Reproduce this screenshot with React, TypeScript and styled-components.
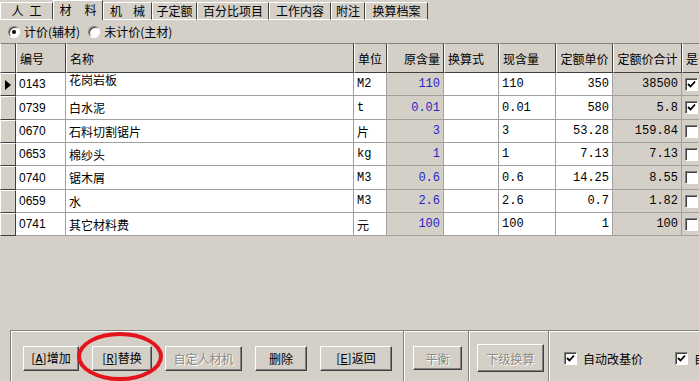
import styled, { createGlobalStyle } from 'styled-components';

const GlobalStyle = createGlobalStyle`
  body {
    margin: 0;
    background: #d4d0c8;
  }
`

const CJK = `"Noto Sans CJK SC", "Liberation Sans", sans-serif`
const MONO = `"Liberation Mono", "Noto Sans CJK SC", monospace`

const Window = styled.div`
  width: 699px;
  height: 381px;
  overflow: hidden;
  background: #d4d0c8;
  display: flex;
  flex-direction: column;
  position: relative;
  font-family: ${CJK};
  font-size: 12px;
  color: #000;
`

const TabBar = styled.div`
  display: flex;
  align-items: flex-end;
  height: 20px;
  flex-shrink: 0;
`

const Tab = styled.div<{ $w: number; $active?: boolean; $spacing?: number }>`
  box-sizing: border-box;
  width: ${p => p.$w}px;
  height: ${p => (p.$active ? 20 : 18)}px;
  display: flex;
  align-items: center;
  justify-content: center;
  border-top: 1px solid #fff;
  border-left: 1px solid #fff;
  border-right: 1px solid #404040;
  border-bottom: ${p => (p.$active ? 'none' : '1px solid #fff')};
  letter-spacing: ${p => p.$spacing ?? 0}px;
  text-indent: ${p => p.$spacing ?? 0}px;
  line-height: 1;
  padding-bottom: ${p => (p.$active ? 2 : 0)}px;
  white-space: nowrap;
`

const RadioRow = styled.div`
  height: 23px;
  flex-shrink: 0;
  display: flex;
  align-items: center;
  padding-left: 8px;
`

const RadioItem = styled.label<{ $gap?: number }>`
  display: flex;
  align-items: center;
  gap: 4px;
  margin-right: ${p => p.$gap ?? 0}px;
`

const RadioDot = styled.span<{ $on?: boolean }>`
  box-sizing: border-box;
  width: 12px;
  height: 12px;
  border-radius: 50%;
  background: #fff;
  border: 1px solid;
  border-color: #808080 #fff #fff #808080;
  box-shadow: inset 1px 1px 0 #404040;
  display: flex;
  align-items: center;
  justify-content: center;

  &::after {
    content: '';
    width: 4px;
    height: 4px;
    border-radius: 50%;
    background: ${p => (p.$on ? '#000' : 'transparent')};
  }
`

const Grid = styled.div`
  flex-shrink: 0;
  display: flex;
  flex-direction: column;
  width: 740px;
`

const Row = styled.div<{ $h: number }>`
  display: flex;
  height: ${p => p.$h}px;
`

const HeadCell = styled.div<{ $w: number; $align?: string }>`
  box-sizing: border-box;
  width: ${p => p.$w}px;
  flex-shrink: 0;
  display: flex;
  align-items: center;
  justify-content: ${p => p.$align ?? 'flex-start'};
  padding: 0 3px;
  background: #d4d0c8;
  border-top: 1px solid #808080;
  border-left: 1px solid #fff;
  border-right: 1px solid #404040;
  border-bottom: 1px solid #404040;
  white-space: nowrap;
  overflow: hidden;
`

const Indicator = styled.div`
  box-sizing: border-box;
  width: 16px;
  flex-shrink: 0;
  background: #d4d0c8;
  border-top: 1px solid #fff;
  border-left: 1px solid #fff;
  border-right: 1px solid #404040;
  border-bottom: 1px solid #404040;
  display: flex;
  align-items: center;
  padding-left: 4px;
`

const Arrow = styled.span`
  width: 0;
  height: 0;
  border-top: 5px solid transparent;
  border-bottom: 5px solid transparent;
  border-left: 6px solid #000;
`

const Cell = styled.div<{ $w: number; $gray?: boolean; $right?: boolean; $mono?: boolean; $blue?: boolean; $top?: boolean }>`
  box-sizing: border-box;
  width: ${p => p.$w}px;
  flex-shrink: 0;
  display: flex;
  align-items: ${p => (p.$top ? 'flex-start' : 'center')};
  justify-content: ${p => (p.$right ? 'flex-end' : 'flex-start')};
  padding: 0 3px;
  background: ${p => (p.$gray ? '#d4d0c8' : '#fff')};
  border-right: 1px solid #a0a0a0;
  border-bottom: 1px solid #a0a0a0;
  color: ${p => (p.$blue ? '#2626c8' : '#000')};
  font-family: ${p => (p.$mono ? MONO : CJK)};
  font-size: 12px;
  line-height: ${p => (p.$top ? '14px' : 'normal')};
  white-space: nowrap;
  overflow: hidden;
`

const CodeText = styled.span`
  font-family: "Liberation Sans", sans-serif;
`

const CheckBox = styled.span`
  box-sizing: border-box;
  width: 13px;
  height: 13px;
  background: #fff;
  border: 1px solid;
  border-color: #808080 #fff #fff #808080;
  box-shadow: inset 1px 1px 0 #404040;
  display: flex;
  align-items: center;
  justify-content: center;
  flex-shrink: 0;
`

const Spacer = styled.div`
  flex: 1;
`

const BottomBar = styled.div`
  height: 51px;
  flex-shrink: 0;
  margin-left: 10px;
  display: flex;
`

const Group = styled.div<{ $w?: number; $pad: number }>`
  box-sizing: border-box;
  ${p => (p.$w ? `width: ${p.$w}px;` : 'flex: 1;')}
  flex-shrink: 0;
  display: flex;
  align-items: center;
  gap: 13px;
  padding-left: ${p => p.$pad}px;
  padding-top: 4px;
  border-top: 1px solid #808080;
  border-left: 1px solid #808080;
  box-shadow: inset 1px 1px 0 #fff;
  white-space: nowrap;
`

const Button = styled.button<{ $w: number; $h?: number }>`
  box-sizing: border-box;
  width: ${p => p.$w}px;
  height: ${p => p.$h ?? 25}px;
  padding: 0;
  background: #d4d0c8;
  border: 1px solid;
  border-color: #fff #404040 #404040 #fff;
  box-shadow: inset -1px -1px 0 #808080;
  font-family: ${CJK};
  font-size: 12px;
  color: #000;
  &:disabled {
    color: #8c8a85;
    text-shadow: 1px 1px 0 #fff;
  }
`

const Key = styled.span`
  font-family: ${MONO};
  font-size: 12px;
  text-decoration: underline;
`

const CheckLabel = styled.label<{ $gap?: number }>`
  display: flex;
  align-items: center;
  gap: 6px;
  margin-right: ${p => p.$gap ?? 0}px;
  white-space: nowrap;
  flex-shrink: 0;
`

const Ring = styled.div`
  position: absolute;
  left: 77px;
  top: 332px;
  width: 86px;
  height: 49px;
  box-sizing: border-box;
  border: 4px solid #e5141c;
  border-radius: 50%;
  pointer-events: none;
`

const Tick = () => (
  <svg width="9" height="9" viewBox="0 0 9 9">
    <path d="M1 4 L3.5 6.5 L8 1.5" fill="none" stroke="#000" strokeWidth="1.8" />
  </svg>
)

const cols = [16, 50, 288, 33, 57, 55, 57, 57, 69, 58]

const tabs = [
  { t: '人工', w: 53, spacing: 6 },
  { t: '材料', w: 50, active: true, spacing: 13 },
  { t: '机械', w: 49, spacing: 11 },
  { t: '子定额', w: 45 },
  { t: '百分比项目', w: 72 },
  { t: '工作内容', w: 62 },
  { t: '附注', w: 34 },
  { t: '换算档案', w: 63 },
]

const rows = [
  { code: '0143', name: '花岗岩板', unit: 'M2', base: '110', now: '110', price: '350', total: '38500', on: true, h: 23 },
  { code: '0739', name: '白水泥', unit: 't', base: '0.01', now: '0.01', price: '580', total: '5.8', on: true, h: 24 },
  { code: '0670', name: '石料切割锯片', unit: '片', base: '3', now: '3', price: '53.28', total: '159.84', h: 23 },
  { code: '0653', name: '棉纱头', unit: 'kg', base: '1', now: '1', price: '7.13', total: '7.13', h: 23 },
  { code: '0740', name: '锯木屑', unit: 'M3', base: '0.6', now: '0.6', price: '14.25', total: '8.55', h: 24 },
  { code: '0659', name: '水', unit: 'M3', base: '2.6', now: '2.6', price: '0.7', total: '1.82', h: 23 },
  { code: '0741', name: '其它材料费', unit: '元', base: '100', now: '100', price: '1', total: '100', h: 23 },
]

const App = () => {
  return (
    <Window>
      <GlobalStyle />
      <TabBar>
        {tabs.map(tab => (
          <Tab key={tab.t} $w={tab.w} $active={tab.active} $spacing={tab.spacing}>{tab.t}</Tab>
        ))}
      </TabBar>

      <RadioRow>
        <RadioItem $gap={8}><RadioDot $on />计价(辅材)</RadioItem>
        <RadioItem><RadioDot />未计价(主材)</RadioItem>
      </RadioRow>

      <Grid>
        <Row $h={30}>
          <HeadCell $w={cols[0]} />
          <HeadCell $w={cols[1]}>编号</HeadCell>
          <HeadCell $w={cols[2]}>名称</HeadCell>
          <HeadCell $w={cols[3]}>单位</HeadCell>
          <HeadCell $w={cols[4]} $align="flex-end">原含量</HeadCell>
          <HeadCell $w={cols[5]}>换算式</HeadCell>
          <HeadCell $w={cols[6]}>现含量</HeadCell>
          <HeadCell $w={cols[7]} $align="center">定额单价</HeadCell>
          <HeadCell $w={cols[8]} $align="center">定额价合计</HeadCell>
          <HeadCell $w={cols[9]}>是否主材</HeadCell>
        </Row>
        {rows.map((r, i) => (
          <Row key={r.code} $h={r.h}>
            <Indicator>{i === 0 && <Arrow />}</Indicator>
            <Cell $w={cols[1]}><CodeText>{r.code}</CodeText></Cell>
            <Cell $w={cols[2]} $top={i === 0}>{r.name}</Cell>
            <Cell $w={cols[3]} $mono={/^[A-Za-z0-9]+$/.test(r.unit)}>{r.unit}</Cell>
            <Cell $w={cols[4]} $gray $right $mono $blue>{r.base}</Cell>
            <Cell $w={cols[5]} />
            <Cell $w={cols[6]} $mono>{r.now}</Cell>
            <Cell $w={cols[7]} $right $mono>{r.price}</Cell>
            <Cell $w={cols[8]} $gray $right $mono>{r.total}</Cell>
            <Cell $w={cols[9]} $gray>
              <CheckBox>{r.on && <Tick />}</CheckBox>
            </Cell>
          </Row>
        ))}
      </Grid>

      <Spacer />

      <BottomBar>
        <Group $w={393} $pad={12}>
          <Button $w={56}>[<Key>A</Key>]增加</Button>
          <Button $w={60}>[<Key>R</Key>]替换</Button>
          <Button $w={77} disabled>自定人材机</Button>
          <Button $w={52}>删除</Button>
          <Button $w={72}>[<Key>E</Key>]返回</Button>
        </Group>
        <Group $w={65} $pad={9}>
          <Button $w={49} $h={24} disabled>平衡</Button>
        </Group>
        <Group $w={80} $pad={8}>
          <Button $w={67} $h={28} disabled>下级换算</Button>
        </Group>
        <Group $pad={15}>
          <CheckLabel $gap={19}><CheckBox><Tick /></CheckBox>自动改基价</CheckLabel>
          <CheckLabel><CheckBox><Tick /></CheckBox>自动</CheckLabel>
        </Group>
      </BottomBar>

      <Ring />
    </Window>
  );
};

export default App;
